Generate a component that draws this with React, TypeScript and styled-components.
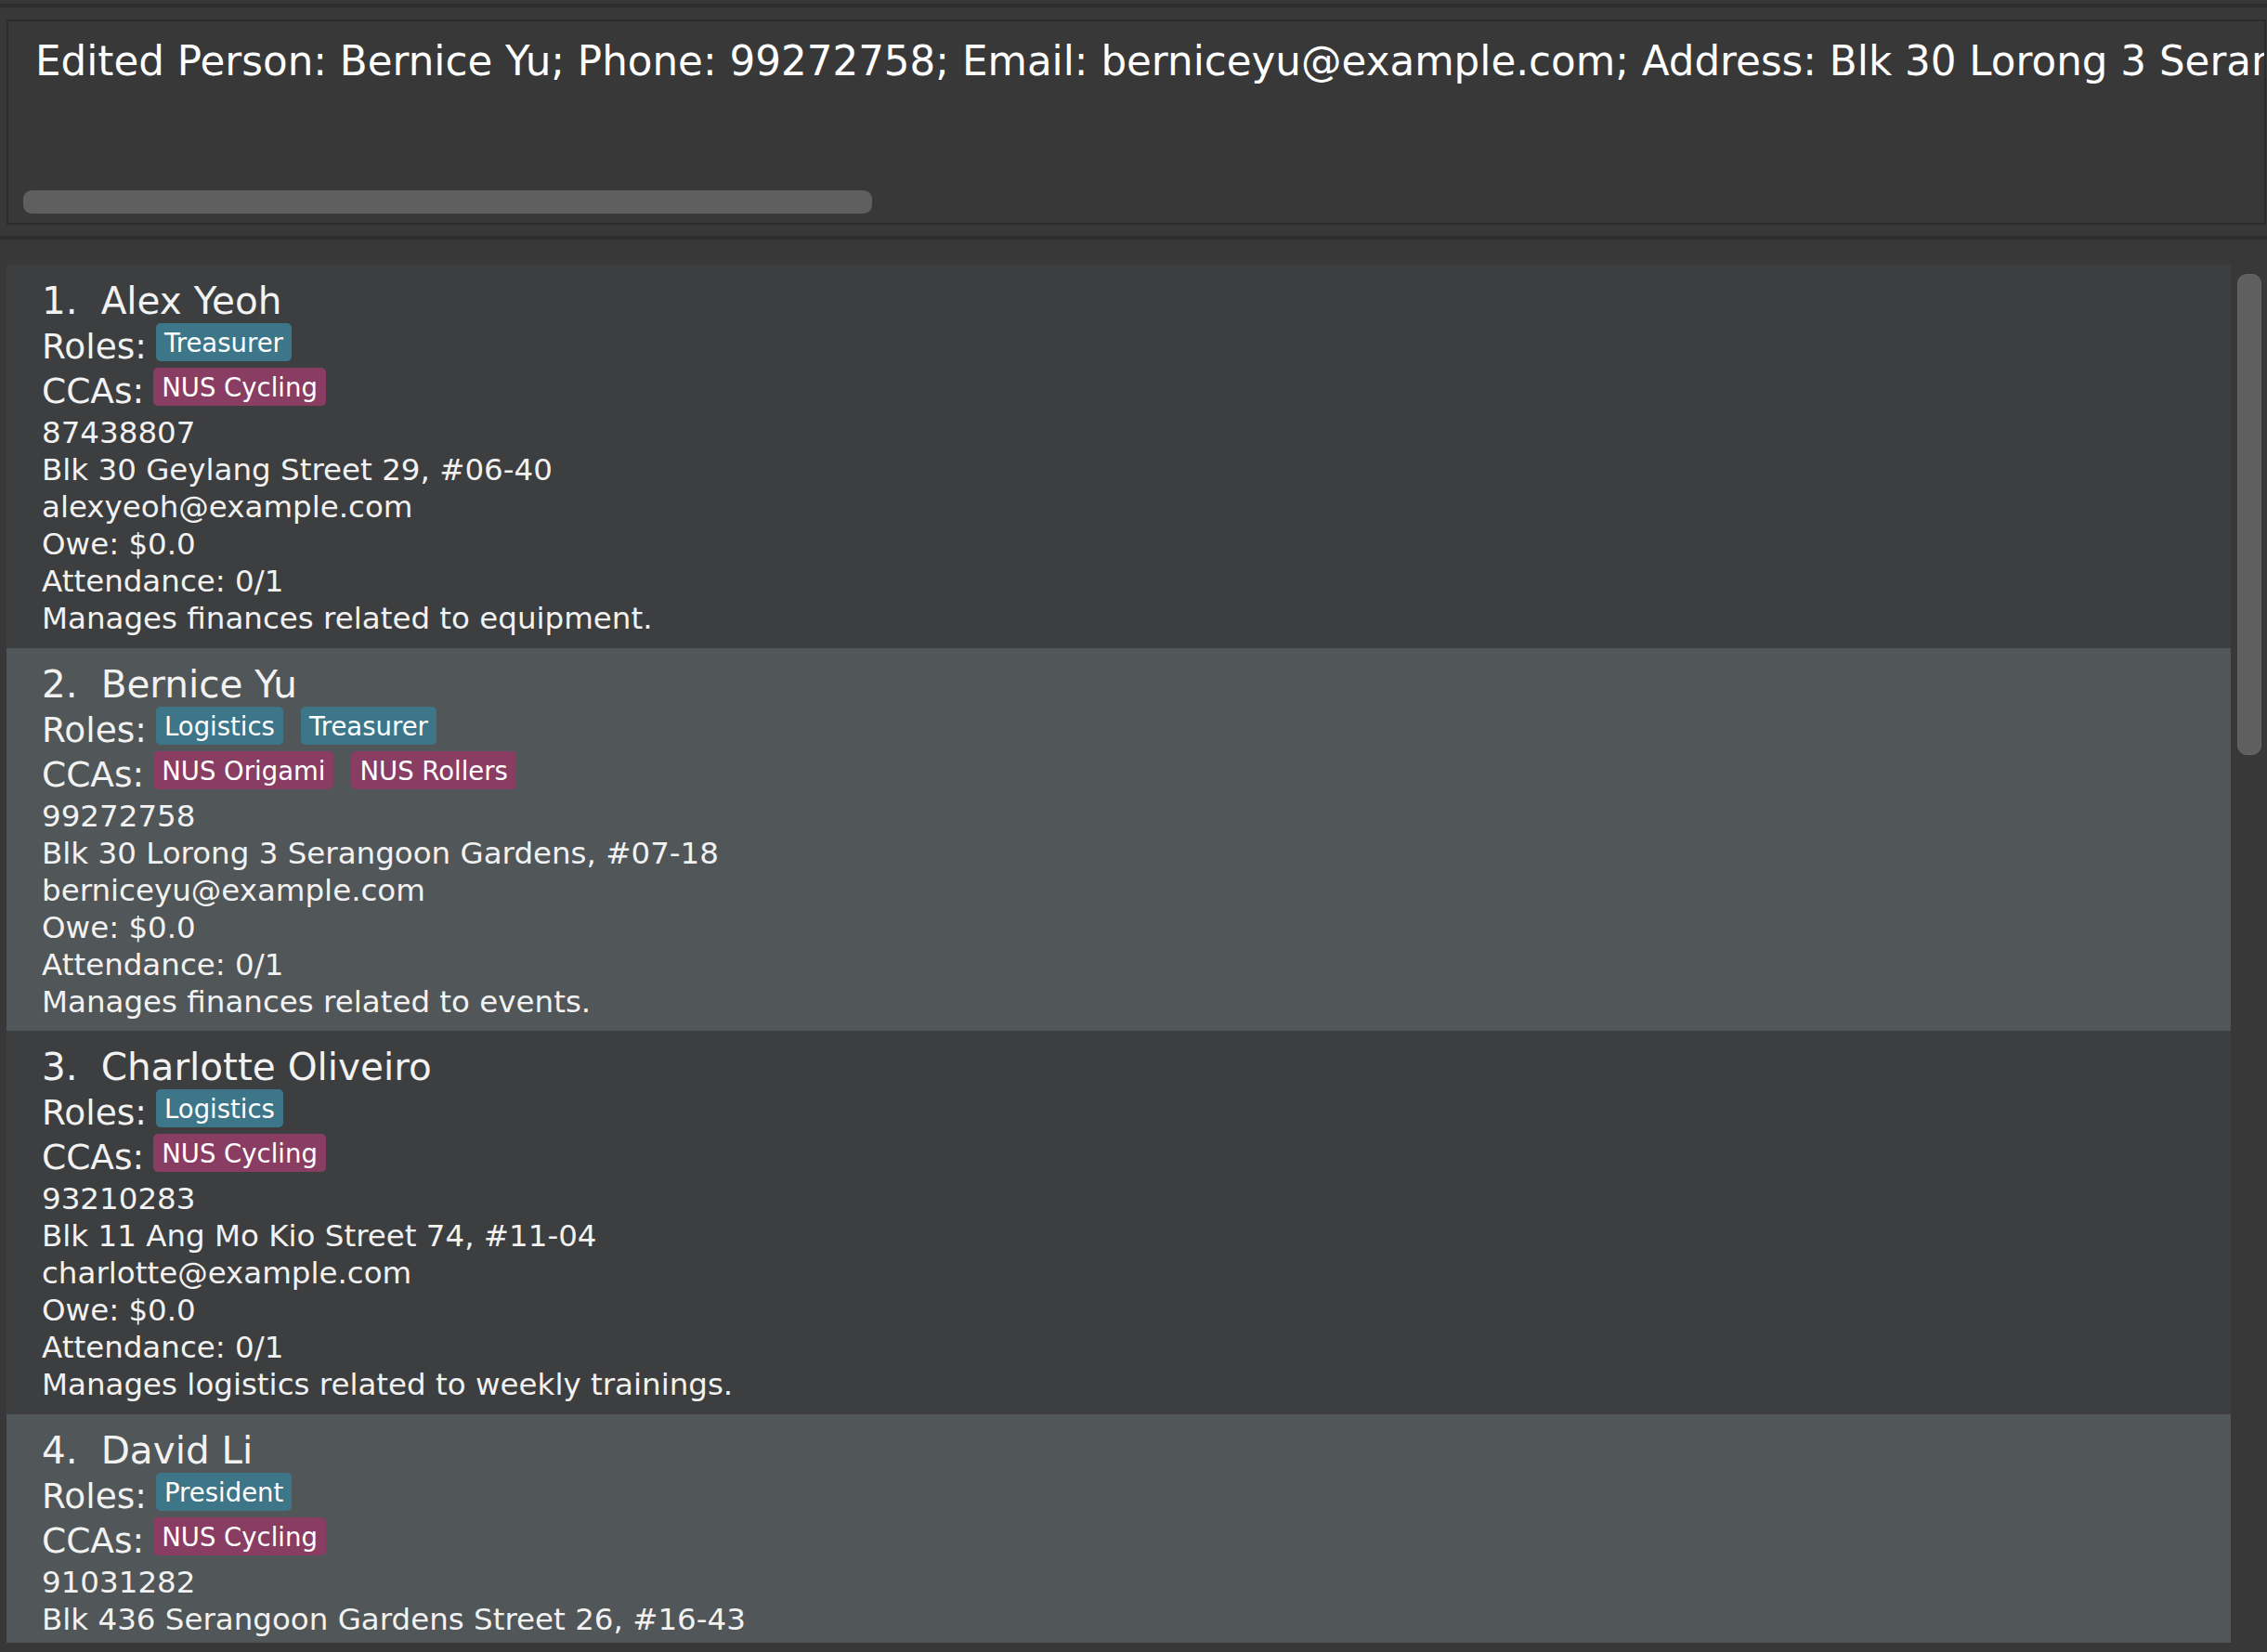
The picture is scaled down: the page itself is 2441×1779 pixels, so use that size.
import React from "react";
import styled, { createGlobalStyle } from "styled-components";

const GlobalStyle = createGlobalStyle`
  html, body {
    margin: 0;
    padding: 0;
    background: #383838;
  }
  body {
    font-family: "DejaVu Sans", "Liberation Sans", sans-serif;
  }
  * { box-sizing: border-box; }
`;

const Page = styled.div`
  width: 2441px;
  height: 1779px;
  display: flex;
  flex-direction: column;
  overflow: hidden;
  background: #383838;
`;

const TopBand = styled.div`
  height: 4px;
  flex: 0 0 auto;
  background: #383838;
`;

const Divider = styled.div`
  height: 4px;
  flex: 0 0 auto;
  background: #2d2d2d;
`;

const ResultPane = styled.div`
  height: 246px;
  flex: 0 0 auto;
  padding: 13px 1px 12px 7px;
`;

const ResultBox = styled.div`
  height: 100%;
  border: 2px solid #2b2b2b;
  background: #383838;
  display: flex;
  flex-direction: column;
`;

const ResultViewport = styled.div`
  flex: 1;
  min-height: 0;
  overflow: hidden;
  padding: 18px 0 0 29px;
  white-space: nowrap;
  font-size: 43.6px;
  line-height: normal;
  color: #ffffff;
`;

const HScrollTrack = styled.div`
  height: 40px;
  flex: 0 0 auto;
  padding: 5px 0 10px 16px;
`;

const HScrollThumb = styled.div`
  width: 914px;
  height: 25px;
  border-radius: 9px;
  background: #5f5f5f;
`;

const ListPane = styled.div`
  flex: 1;
  min-height: 0;
  padding: 27px 0 10px 7px;
  display: flex;
`;

const ListViewport = styled.div`
  flex: 0 0 2395px;
  height: 100%;
  overflow: hidden;
  display: flex;
  flex-direction: column;
`;

const VScrollTrack = styled.div`
  flex: 1;
  padding: 10px 0 0 7px;
`;

const VScrollThumb = styled.div`
  width: 26px;
  height: 518px;
  border-radius: 10px;
  background: #5f5f5f;
  border: 1px solid #666666;
`;

const Card = styled.div<{ $odd: boolean }>`
  flex: 0 0 auto;
  background: ${(p) => (p.$odd ? "#515658" : "#3c3e3f")};
  padding: 16px 0 11.5px 38px;
  display: flex;
  flex-direction: column;
  color: #f2f2f2;
`;

const NameRow = styled.div`
  display: flex;
  font-size: 40.5px;
  line-height: 47px;
  height: 47px;
  white-space: nowrap;
`;

const IdLabel = styled.span`
  margin-right: 25px;
`;

const TagRow = styled.div`
  display: flex;
  align-items: flex-start;
  height: 48px;
`;

const RowLabel = styled.span`
  font-size: 37.5px;
  line-height: normal;
  margin-top: 3px;
  margin-right: 10px;
  white-space: nowrap;
`;

const Tags = styled.div`
  display: flex;
  gap: 19px;
`;

const Tag = styled.span<{ $kind: "role" | "cca" }>`
  height: 41px;
  line-height: 42px;
  padding: 0 9px;
  font-size: 27.5px;
  border-radius: 5px;
  color: #ffffff;
  white-space: nowrap;
  background: ${(p) => (p.$kind === "role" ? "#3d7689" : "#8a3d63")};
`;

const InfoBlock = styled.div`
  margin-top: 2px;
  font-size: 32.5px;
  line-height: 40px;
  white-space: nowrap;
`;

const InfoLine = styled.div``;

type Person = {
  name: string;
  roles: string[];
  ccas: string[];
  phone: string;
  address: string;
  email: string;
  owe: string;
  attendance: string;
  remark: string;
};

const people: Person[] = [
  {
    name: "Alex Yeoh",
    roles: ["Treasurer"],
    ccas: ["NUS Cycling"],
    phone: "87438807",
    address: "Blk 30 Geylang Street 29, #06-40",
    email: "alexyeoh@example.com",
    owe: "Owe: $0.0",
    attendance: "Attendance: 0/1",
    remark: "Manages finances related to equipment.",
  },
  {
    name: "Bernice Yu",
    roles: ["Logistics", "Treasurer"],
    ccas: ["NUS Origami", "NUS Rollers"],
    phone: "99272758",
    address: "Blk 30 Lorong 3 Serangoon Gardens, #07-18",
    email: "berniceyu@example.com",
    owe: "Owe: $0.0",
    attendance: "Attendance: 0/1",
    remark: "Manages finances related to events.",
  },
  {
    name: "Charlotte Oliveiro",
    roles: ["Logistics"],
    ccas: ["NUS Cycling"],
    phone: "93210283",
    address: "Blk 11 Ang Mo Kio Street 74, #11-04",
    email: "charlotte@example.com",
    owe: "Owe: $0.0",
    attendance: "Attendance: 0/1",
    remark: "Manages logistics related to weekly trainings.",
  },
  {
    name: "David Li",
    roles: ["President"],
    ccas: ["NUS Cycling"],
    phone: "91031282",
    address: "Blk 436 Serangoon Gardens Street 26, #16-43",
    email: "lidavid@example.com",
    owe: "Owe: $0.0",
    attendance: "Attendance: 0/1",
    remark: "President of the club.",
  },
];

const resultText =
  "Edited Person: Bernice Yu; Phone: 99272758; Email: berniceyu@example.com; Address: Blk 30 Lorong 3 Serangoon Gardens, #07-18; Roles: Logistics, Treasurer; CCAs: NUS Origami, NUS Rollers";

export default function App() {
  return (
    <>
      <GlobalStyle />
      <Page>
        <TopBand />
        <Divider />
        <ResultPane>
          <ResultBox>
            <ResultViewport>{resultText}</ResultViewport>
            <HScrollTrack>
              <HScrollThumb />
            </HScrollTrack>
          </ResultBox>
        </ResultPane>
        <Divider />
        <ListPane>
          <ListViewport>
            {people.map((p, i) => (
              <Card key={p.name} $odd={i % 2 === 1}>
                <NameRow>
                  <IdLabel>{i + 1}.</IdLabel>
                  <span>{p.name}</span>
                </NameRow>
                <TagRow>
                  <RowLabel>Roles:</RowLabel>
                  <Tags>
                    {p.roles.map((r) => (
                      <Tag key={r} $kind="role">
                        {r}
                      </Tag>
                    ))}
                  </Tags>
                </TagRow>
                <TagRow>
                  <RowLabel>CCAs:</RowLabel>
                  <Tags>
                    {p.ccas.map((c) => (
                      <Tag key={c} $kind="cca">
                        {c}
                      </Tag>
                    ))}
                  </Tags>
                </TagRow>
                <InfoBlock>
                  <InfoLine>{p.phone}</InfoLine>
                  <InfoLine>{p.address}</InfoLine>
                  <InfoLine>{p.email}</InfoLine>
                  <InfoLine>{p.owe}</InfoLine>
                  <InfoLine>{p.attendance}</InfoLine>
                  <InfoLine>{p.remark}</InfoLine>
                </InfoBlock>
              </Card>
            ))}
          </ListViewport>
          <VScrollTrack>
            <VScrollThumb />
          </VScrollTrack>
        </ListPane>
      </Page>
    </>
  );
}
